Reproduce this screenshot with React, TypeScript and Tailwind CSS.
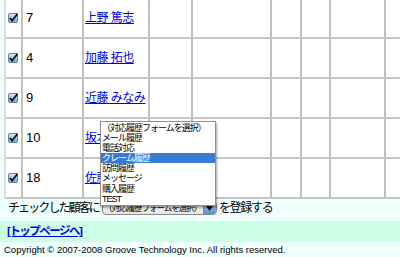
import React from "react";

const rows = [
  { id: "7", name: "上野 篤志" },
  { id: "4", name: "加藤 拓也" },
  { id: "9", name: "近藤 みなみ" },
  { id: "10", name: "坂本 健太" },
  { id: "18", name: "佐藤 美穂" },
];

const widths = [17, 61, 66, 43, 79, 30, 29, 55, 40];

const options = [
  "（対応履歴フォームを選択）",
  "メール履歴",
  "電話対応",
  "クレーム履歴",
  "訪問履歴",
  "メッセージ",
  "購入履歴",
  "TEST",
];

function Check() {
  return (
    <svg width="10" height="10" viewBox="0 0 10 10">
      <defs>
        <linearGradient id="cb" x1="0" y1="0" x2="0" y2="1">
          <stop offset="0" stopColor="#d6ecff" />
          <stop offset="1" stopColor="#6fa8e0" />
        </linearGradient>
      </defs>
      <rect x="0.5" y="0.5" width="9" height="9" rx="1.5" fill="url(#cb)" stroke="#5b7fa8" />
      <path d="M2 5 L4.2 7.5 L9.5 0.8" fill="none" stroke="#111" strokeWidth="1.8" />
    </svg>
  );
}

export default function App() {
  const font = { fontFamily: '"Liberation Sans", "Noto Sans CJK JP", sans-serif' };
  return (
    <div className="w-[400px] h-[257px] overflow-hidden bg-[#effffd] relative" style={font}>
      <div className="ml-[4px] -mt-[1px] border-l-2 border-[#dedede] bg-white w-[430px]">
        {rows.map((r) => (
          <div key={r.id} className="flex h-[40px] border-b-2 border-[#c6c6c6]">
            {widths.map((w, i) => (
              <div
                key={i}
                className="border-r-2 border-[#c0c0c0] flex items-center shrink-0"
                style={{ width: w }}
              >
                {i === 0 && (
                  <div className="pl-[2px] flex items-center">
                    <Check />
                  </div>
                )}
                {i === 1 && <span className="pl-[3px] text-[13px] text-black">{r.id}</span>}
                {i === 2 && (
                  <a className="pl-[1px] text-[12px] tracking-[-0.5px] text-[#0000ee] underline whitespace-nowrap">
                    {r.name}
                  </a>
                )}
              </div>
            ))}
          </div>
        ))}
      </div>
      <div className="flex items-center h-[20px] pl-[8px] text-[12px] text-black -mt-[1px]">
        <span className="tracking-[-1.9px]">チェックした顧客に</span>
        <div className="ml-[3px] w-[115px] h-[14px] shrink-0 rounded-[4px] border border-[#8a8a8a] bg-gradient-to-b from-white to-[#e4e4e4] flex items-center overflow-hidden">
          <span className="flex-1 min-w-0 overflow-hidden pl-[1px] whitespace-nowrap text-[8.5px] tracking-[-1px]">
            （対応履歴フォームを選択）
          </span>
          <span className="w-[13px] shrink-0 h-full bg-gradient-to-b from-[#b7d5f4] to-[#4f8fd6] border-l border-[#7a8ea8] flex items-center justify-center">
            <svg width="7" height="5" viewBox="0 0 7 5">
              <path d="M0 0 L7 0 L3.5 5 Z" fill="#111" />
            </svg>
          </span>
        </div>
        <span className="ml-[2px] tracking-[-1.3px]">を登録する</span>
      </div>
      <div className="mt-[3px] h-[21px] bg-[#ccffe6] flex items-center pl-[7px]">
        <a className="text-[11.5px] tracking-[-1.5px] text-[#0000ee] underline font-semibold">[トップページへ]</a>
      </div>
      <div className="pl-[4px] text-[9.5px] text-black mt-[1px] whitespace-nowrap">
        Copyright © 2007-2008 Groove Technology Inc. All rights reserved.
      </div>
      <div className="absolute left-[100px] top-[121px] w-[116px] bg-white border border-[#8f8f8f] shadow-[1px_2px_2px_rgba(0,0,0,0.35)] text-[9px] tracking-[-1px] text-black leading-[10.2px] py-[0.5px]">
        {options.map((o, i) => (
          <div
            key={o}
            className={
              "h-[10.2px] whitespace-nowrap pl-[1px] overflow-hidden " +
              (i === 3 ? "bg-[#3b7bd8] text-white" : "")
            }
          >
            {o}
          </div>
        ))}
      </div>
    </div>
  );
}
